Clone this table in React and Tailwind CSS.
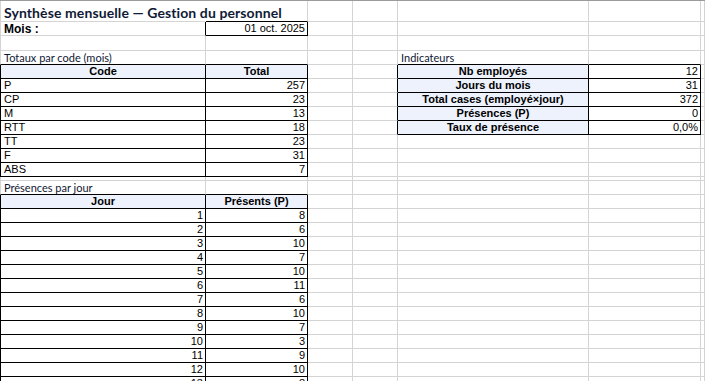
import React from 'react';

// column widths of the sheet, borders included (A..F, then the rest)
const COLS = ['w-[206px]', 'w-[102px]', 'w-[45px]', 'w-[45px]', 'w-[191px]', 'w-[112px]', 'flex-1'];

const Cell = ({ i, r, b, l, bg, align = 'left', bold, children, className = '' }) => {
  const justify = align === 'right' ? 'justify-end pr-[2px]' : align === 'center' ? 'justify-center' : 'justify-start pl-[3px]';
  return (
    <div
      className={`shrink-0 flex items-center whitespace-nowrap border-r border-b ${COLS[i]} ${justify} ${
        r === 'black' ? 'border-r-black' : r === 'none' ? 'border-r-transparent' : 'border-r-[#d4d4d4]'
      } ${b === 'black' ? 'border-b-black' : 'border-b-[#d4d4d4]'} ${
        i === 0 ? (l ? 'border-l border-l-black' : 'border-l border-l-[#d4d4d4]') : ''
      } ${bg ? 'bg-[#edf2fc]' : ''} ${bold ? 'font-bold' : ''} ${className}`}
    >
      {children}
    </div>
  );
};

const Row = ({ h = 'h-[14px]', children }) => <div className={`flex ${h}`}>{children}</div>;

const codes = [
  ['P', 257],
  ['CP', 23],
  ['M', 13],
  ['RTT', 18],
  ['TT', 23],
  ['F', 31],
  ['ABS', 7],
];

const indicators = [
  ['Nb employés', '12'],
  ['Jours du mois', '31'],
  ['Total cases (employé×jour)', '372'],
  ['Présences (P)', '0'],
  ['Taux de présence', '0,0%'],
];

const days = [8, 6, 10, 7, 10, 11, 6, 10, 7, 3, 9, 10, 8];

const Label = ({ children }) => (
  <span className="text-[11px] text-[#0f1733] font-['Lato',sans-serif]">{children}</span>
);

export default function App() {
  // rows 5..12 : code table on the left, indicators on the right for the first five
  const codeRows = [null, ...codes].map((c, k) => {
    const ind = k < indicators.length ? indicators[k] : null;
    return (
      <Row key={k}>
        <Cell i={0} r="black" b="black" l bg={!c} align={c ? 'left' : 'center'} bold={!c}>
          {c ? c[0] : 'Code'}
        </Cell>
        <Cell i={1} r="black" b="black" bg={!c} align={c ? 'right' : 'center'} bold={!c}>
          {c ? c[1] : 'Total'}
        </Cell>
        <Cell i={2} />
        <Cell i={3} r={ind ? 'black' : undefined} />
        <Cell i={4} r={ind ? 'black' : undefined} b={ind ? 'black' : undefined} bg={!!ind} align="center" bold>
          {ind && ind[0]}
        </Cell>
        <Cell i={5} r={ind ? 'black' : undefined} b={ind ? 'black' : undefined} align="right">
          {ind && ind[1]}
        </Cell>
        <Cell i={6} />
      </Row>
    );
  });

  return (
    <div className="w-[705px] h-[381px] overflow-hidden bg-white text-[11px] leading-none text-black font-['Liberation_Sans',Arial,sans-serif] border-t border-t-[#9b9b9b]">
      <Row h="h-[21px]">
        <Cell i={0} r="none" className="overflow-visible">
          <span className="text-[14px] font-bold text-[#101a36] font-['Lato',sans-serif] tracking-[0.1px] pt-[3px]">
            Synthèse mensuelle — Gestion du personnel
          </span>
        </Cell>
        <Cell i={1} b="black" />
        <Cell i={2} />
        <Cell i={3} />
        <Cell i={4} />
        <Cell i={5} />
        <Cell i={6} />
      </Row>

      <Row>
        <Cell i={0} r="black" bold className="text-[12px]">
          Mois :
        </Cell>
        <Cell i={1} r="black" b="black" align="right">
          01 oct. 2025
        </Cell>
        <Cell i={2} />
        <Cell i={3} />
        <Cell i={4} />
        <Cell i={5} />
        <Cell i={6} />
      </Row>

      <Row h="h-[15px]">
        {COLS.map((_, i) => (
          <Cell key={i} i={i} />
        ))}
      </Row>

      <Row>
        <Cell i={0} b="black">
          <Label>Totaux par code (mois)</Label>
        </Cell>
        <Cell i={1} b="black" />
        <Cell i={2} />
        <Cell i={3} />
        <Cell i={4} b="black">
          <Label>Indicateurs</Label>
        </Cell>
        <Cell i={5} b="black" />
        <Cell i={6} />
      </Row>

      {codeRows}

      <Row h="h-[4px]">
        {COLS.map((_, i) => (
          <Cell key={i} i={i} />
        ))}
      </Row>

      <Row>
        <Cell i={0} b="black">
          <Label>Présences par jour</Label>
        </Cell>
        <Cell i={1} b="black" />
        <Cell i={2} />
        <Cell i={3} />
        <Cell i={4} />
        <Cell i={5} />
        <Cell i={6} />
      </Row>

      <Row>
        <Cell i={0} r="black" b="black" l bg align="center" bold>
          Jour
        </Cell>
        <Cell i={1} r="black" b="black" bg align="center" bold>
          Présents (P)
        </Cell>
        <Cell i={2} />
        <Cell i={3} />
        <Cell i={4} />
        <Cell i={5} />
        <Cell i={6} />
      </Row>

      {days.map((n, k) => (
        <Row key={k}>
          <Cell i={0} r="black" b="black" l align="right">
            {k + 1}
          </Cell>
          <Cell i={1} r="black" b="black" align="right">
            {n}
          </Cell>
          <Cell i={2} />
          <Cell i={3} />
          <Cell i={4} />
          <Cell i={5} />
          <Cell i={6} />
        </Row>
      ))}
    </div>
  );
}
